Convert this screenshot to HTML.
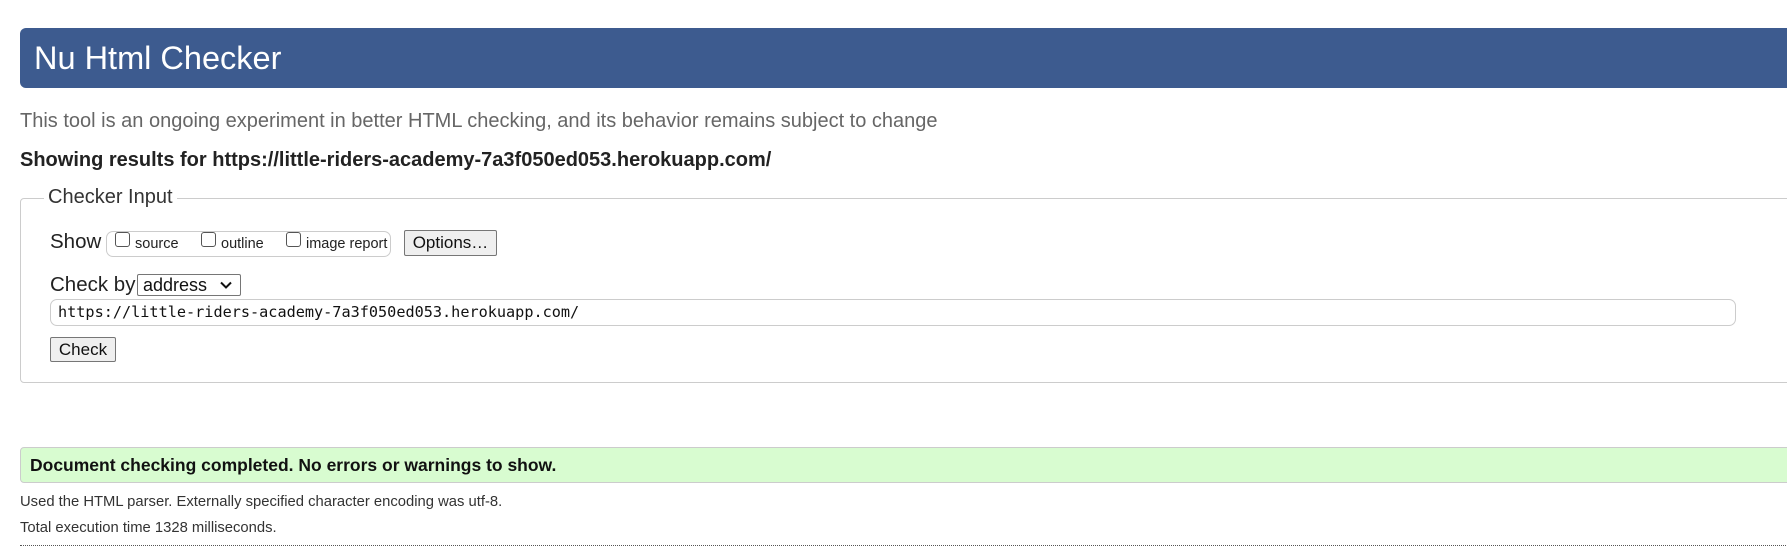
<!DOCTYPE html>
<html><head><meta charset="utf-8"><style>
*{margin:0;padding:0;box-sizing:border-box}
body{width:1787px;height:560px;overflow:hidden;background:#fff;font-family:"Liberation Sans",Arial,sans-serif;color:#222;position:relative}
.a{position:absolute;white-space:nowrap}
.hdr{left:20px;top:28px;width:1800px;height:60px;background:#3d5b8f;border-radius:6px}
.cb{position:absolute;width:15px;height:15px;border:1px solid #555;border-radius:3px;background:#fff}
.btn{position:absolute;background:#efefef;border:1px solid #767676;border-radius:2px;font-size:17px;color:#111;text-align:center}
</style></head><body>
<div class="a hdr"></div>
<div class="a" style="left:34px;top:38px;font-size:32.5px;color:#fff;line-height:40px">Nu Html Checker</div>
<div class="a" style="left:20px;top:109px;font-size:20px;color:#666;line-height:24px">This tool is an ongoing experiment in better HTML checking, and its behavior remains subject to change</div>
<div class="a" style="left:20px;top:148px;font-size:20px;font-weight:bold;color:#222;line-height:24px">Showing results for https://little-riders-academy-7a3f050ed053.herokuapp.com/</div>
<div class="a" style="left:20px;top:198px;width:1800px;height:185px;border:1px solid #ccc;border-radius:4px"></div>
<div class="a" style="left:44px;top:185px;padding:0 4px;background:#fff;font-size:20px;color:#333;line-height:24px">Checker Input</div>
<div class="a" style="left:50px;top:230px;font-size:20.5px;color:#222;line-height:24px">Show</div>
<div class="a" style="left:106px;top:231px;width:285px;height:26px;border:1px solid #ccc;border-radius:7px"></div>
<div class="cb" style="left:115px;top:232px"></div>
<div class="a" style="left:135px;top:236px;font-size:14.5px;color:#222">source</div>
<div class="cb" style="left:201px;top:232px"></div>
<div class="a" style="left:221px;top:236px;font-size:14.5px;color:#222">outline</div>
<div class="cb" style="left:286px;top:232px"></div>
<div class="a" style="left:306px;top:236px;font-size:14.5px;color:#222">image report</div>
<div class="btn" style="left:404px;top:230px;width:93px;height:26px;line-height:24px">Options…</div>
<div class="a" style="left:50px;top:273px;font-size:20.5px;color:#222;line-height:24px">Check by</div>
<div class="a" style="left:137px;top:274px;width:104px;height:22px;border:1px solid #767676;border-radius:2px;font-size:18px;line-height:20px;padding-left:5px;color:#111">address
<svg style="position:absolute;right:8px;top:6px" width="12" height="8" viewBox="0 0 12 8"><path d="M1 1.5L6 6.5L11 1.5" fill="none" stroke="#111" stroke-width="2"/></svg></div>
<div class="a" style="left:50px;top:299px;width:1686px;height:27px;border:1px solid #ccc;border-radius:7px"></div>
<div class="a" style="left:58px;top:302px;font-family:'DejaVu Sans Mono','Liberation Mono',monospace;font-size:15.2px;line-height:20px;color:#111">https://little-riders-academy-7a3f050ed053.herokuapp.com/</div>
<div class="btn" style="left:50px;top:337px;width:66px;height:25px;line-height:23px">Check</div>
<div class="a" style="left:20px;top:447px;width:1800px;height:36px;background:#d8fcd0;border:1px solid #ccc;border-radius:4px"></div>
<div class="a" style="left:30px;top:455px;font-size:17.5px;font-weight:bold;color:#111;line-height:20px">Document checking completed. No errors or warnings to show.</div>
<div class="a" style="left:20px;top:493px;font-size:14.8px;color:#333;line-height:18px">Used the HTML parser. Externally specified character encoding was utf-8.</div>
<div class="a" style="left:20px;top:519px;font-size:14.8px;color:#333;line-height:18px">Total execution time 1328 milliseconds.</div>
<div class="a" style="left:20px;top:545px;width:1800px;border-top:1px dotted #555"></div>
</body></html>
